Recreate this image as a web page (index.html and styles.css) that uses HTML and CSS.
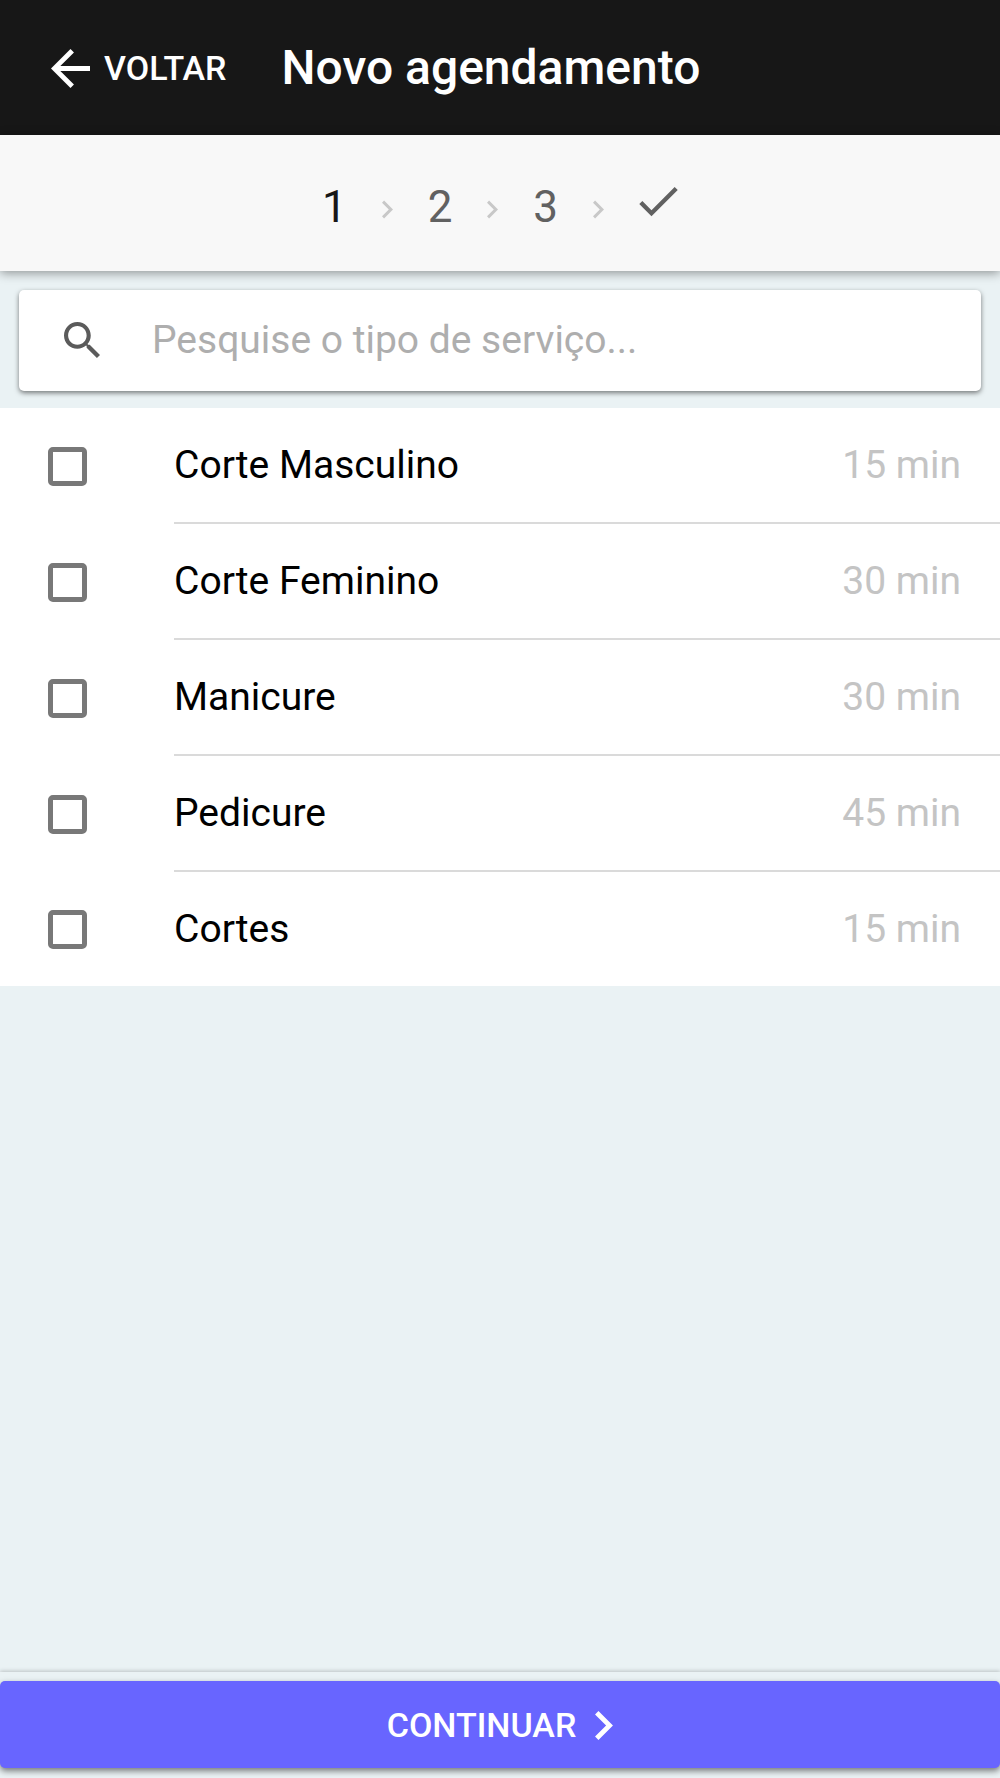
FILE: index.html
```html
<!DOCTYPE html>
<html lang="pt-BR">
<head>
    <meta charset="UTF-8">
    <meta name="viewport" content="width=device-width, initial-scale=1.0">
    <title>Novo agendamento</title>
    <link rel="stylesheet" href="styles.css">
</head>
<body>
    <header class="navbar">
        <button type="button" class="back-button">
            <svg class="icon-back" viewBox="4 4 16 16" aria-hidden="true"><path d="M20 11H7.83l5.59-5.59L12 4l-8 8 8 8 1.41-1.41L7.83 13H20v-2z"/></svg>
            VOLTAR
        </button>
        <h1 class="title">Novo agendamento</h1>
    </header>

    <div class="steps">
        <span class="step active">1</span>
        <svg class="icon-next" viewBox="8.59 6 7.41 14" aria-hidden="true"><path d="M10 6L8.59 7.41 13.17 12l-4.58 4.59L10 18l6-6z"/></svg>
        <span class="step">2</span>
        <svg class="icon-next" viewBox="8.59 6 7.41 14" aria-hidden="true"><path d="M10 6L8.59 7.41 13.17 12l-4.58 4.59L10 18l6-6z"/></svg>
        <span class="step">3</span>
        <svg class="icon-next" viewBox="8.59 6 7.41 14" aria-hidden="true"><path d="M10 6L8.59 7.41 13.17 12l-4.58 4.59L10 18l6-6z"/></svg>
        <svg class="icon-check" viewBox="3.41 5.59 17.59 16" aria-hidden="true"><path d="M9 16.17L4.83 12l-1.42 1.41L9 19 21 7l-1.41-1.41z"/></svg>
    </div>

    <main class="content">
        <div class="search">
            <label class="search-box">
                <svg class="icon-search" viewBox="3 3 17.49 17.49" aria-hidden="true"><path d="M15.5 14h-.79l-.28-.27C15.41 12.59 16 11.11 16 9.5 16 5.91 13.09 3 9.5 3S3 5.91 3 9.5 5.91 16 9.5 16c1.61 0 3.09-.59 4.23-1.57l.27.28v.79l5 4.99L20.49 19l-4.99-5zm-6 0C7.01 14 5 11.99 5 9.5S7.01 5 9.5 5 14 7.01 14 9.5 11.99 14 9.5 14z"/></svg>
                <input type="search" class="search-input" placeholder="Pesquise o tipo de serviço..." aria-label="Pesquise o tipo de serviço">
            </label>
        </div>

        <ul class="list">
            <li class="item">
                <input type="checkbox" class="checkbox" id="servico-1">
                <label class="item-label" for="servico-1">
                    <span>Corte Masculino</span>
                    <span class="time">15 min</span>
                </label>
            </li>
            <li class="item">
                <input type="checkbox" class="checkbox" id="servico-2">
                <label class="item-label" for="servico-2">
                    <span>Corte Feminino</span>
                    <span class="time">30 min</span>
                </label>
            </li>
            <li class="item">
                <input type="checkbox" class="checkbox" id="servico-3">
                <label class="item-label" for="servico-3">
                    <span>Manicure</span>
                    <span class="time">30 min</span>
                </label>
            </li>
            <li class="item">
                <input type="checkbox" class="checkbox" id="servico-4">
                <label class="item-label" for="servico-4">
                    <span>Pedicure</span>
                    <span class="time">45 min</span>
                </label>
            </li>
            <li class="item">
                <input type="checkbox" class="checkbox" id="servico-5">
                <label class="item-label" for="servico-5">
                    <span>Cortes</span>
                    <span class="time">15 min</span>
                </label>
            </li>
        </ul>
    </main>

    <footer class="footer">
        <button type="button" class="continue-button">
            CONTINUAR
            <svg class="icon-forward" viewBox="8.59 6 7.41 12" aria-hidden="true"><path d="M10 6L8.59 7.41 13.17 12l-4.58 4.59L10 18l6-6z"/></svg>
        </button>
    </footer>
</body>
</html>
```

FILE: styles.css
```css
* {
    box-sizing: border-box;
}

body {
    margin: 0;
    min-height: 100vh;
    display: flex;
    flex-direction: column;
    font-family: Roboto, "Liberation Sans", sans-serif;
    font-size: 39px;
    color: #000;
    background-color: #eaf2f4;
}

svg {
    flex: none;
    fill: currentColor;
}

button,
input {
    font-family: inherit;
}

/* top bar */
.navbar {
    display: flex;
    align-items: center;
    gap: 55px;
    padding: 38px 51px 37px;
    color: #fff;
    background-color: #171717;
}

.back-button {
    display: flex;
    align-items: center;
    gap: 14px;
    padding: 0;
    border: none;
    background: none;
    color: inherit;
    font-size: 34px;
    font-weight: 500;
    line-height: 40px;
    cursor: pointer;
}

.icon-back {
    width: 39px;
    height: 39px;
}

.title {
    margin: 0;
    font-size: 48px;
    font-weight: 500;
    line-height: 60px;
}

/* steps */
.steps {
    display: flex;
    justify-content: center;
    align-items: baseline;
    gap: 35px;
    padding: 46px 20px 38px;
    color: #616161;
    background-color: #f8f8f8;
    box-shadow: 0 2px 10px rgba(0, 0, 0, 0.4);
}

.step {
    font-size: 44px;
    line-height: 52px;
}

.step.active {
    color: #171717;
}

.icon-next {
    width: 11px;
    height: 22px;
    color: #c8c8c8;
}

.icon-check {
    width: 39px;
    height: 35px;
}

/* search */
.content {
    flex: 1;
}

.search {
    padding: 19px 19px 17px;
}

.search-box {
    display: flex;
    align-items: center;
    gap: 52px;
    padding: 19px 45px 21px;
    border-radius: 5px;
    background-color: #fff;
    box-shadow: 0 2px 5px rgba(0, 0, 0, 0.5);
}

.icon-search {
    width: 36px;
    height: 36px;
    color: #5b5b5b;
}

.search-input {
    flex: 1;
    min-width: 0;
    height: 61px;
    padding: 0;
    border: none;
    outline: none;
    background: none;
    font-size: 39px;
}

.search-input::placeholder {
    color: #aeaeae;
}

/* list */
.list {
    margin: 0;
    padding: 0;
    list-style: none;
    background-color: #fff;
}

.item {
    display: flex;
    align-items: center;
    gap: 87px;
    padding-left: 48px;
}

.checkbox {
    appearance: none;
    flex: none;
    width: 39px;
    height: 39px;
    margin: 0;
    border: 5px solid #787878;
    border-radius: 5px;
    cursor: pointer;
}

.checkbox:checked {
    border-color: #6865ff;
    background-color: #6865ff;
}

.item-label {
    flex: 1;
    display: flex;
    justify-content: space-between;
    padding: 34px 39px 34px 0;
    border-bottom: 2px solid #dadada;
    line-height: 46px;
}

.item:last-child .item-label {
    border-bottom: none;
}

.time {
    color: #c4c4c4;
}

/* bottom bar */
.footer {
    padding: 9px 0 10px;
    box-shadow: 0 -1px 4px rgba(0, 0, 0, 0.2);
}

.continue-button {
    display: flex;
    justify-content: center;
    align-items: center;
    gap: 19px;
    width: 100%;
    padding: 24px 23px 22px;
    border: none;
    border-radius: 5px;
    color: #fff;
    background-color: #6865ff;
    box-shadow: 0 3px 6px rgba(0, 0, 0, 0.5);
    font-size: 34px;
    font-weight: 500;
    line-height: 41px;
    cursor: pointer;
}

.icon-forward {
    width: 18px;
    height: 29px;
}
```
